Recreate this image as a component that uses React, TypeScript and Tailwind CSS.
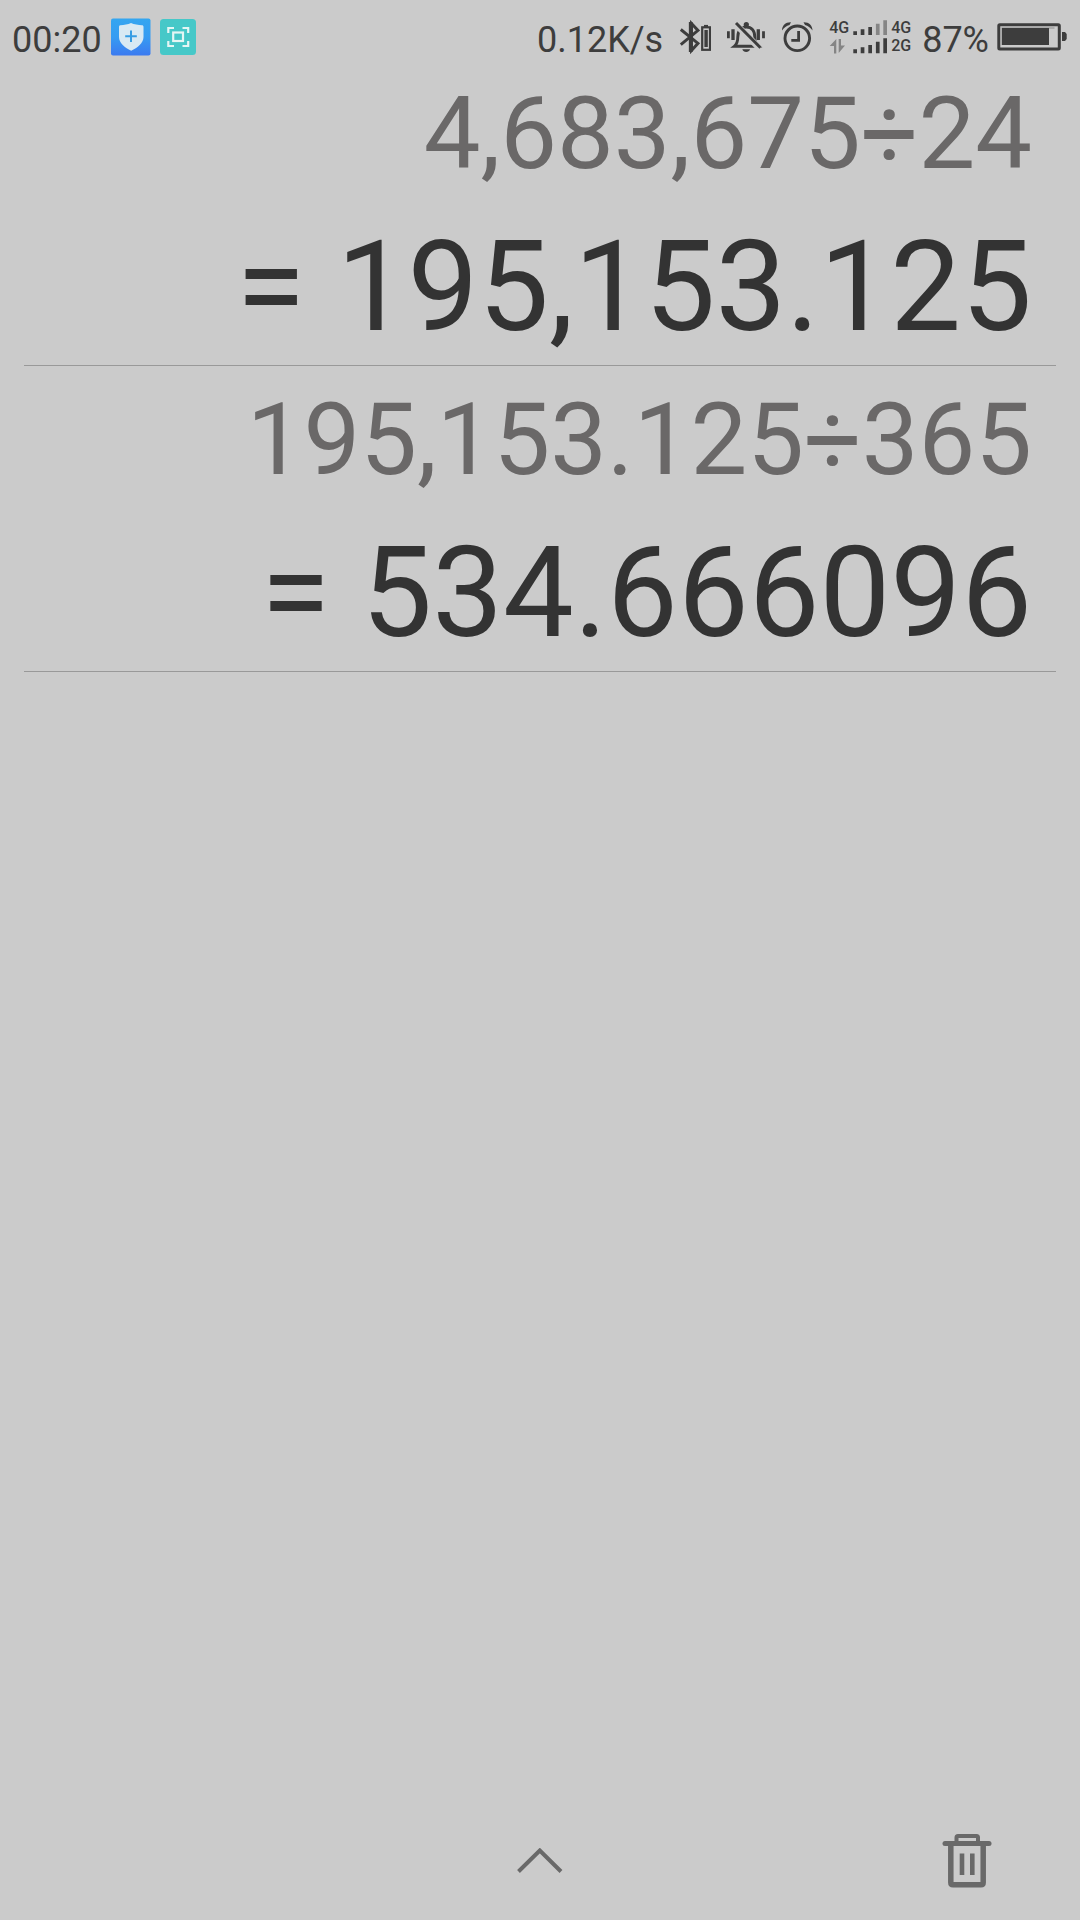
type Entry = { expression: string; result: string };

const history: Entry[] = [
  { expression: '4,683,675÷24', result: '195,153.125' },
  { expression: '195,153.125÷365', result: '534.666096' },
];

function ShieldAppIcon() {
  return (
    <svg width="40" height="38" viewBox="0 0 40 38" aria-hidden="true">
      <defs>
        <linearGradient id="shieldBg" x1="0" y1="0" x2="0" y2="1">
          <stop offset="0" stopColor="#34a6f0" />
          <stop offset="0.5" stopColor="#369cf2" />
          <stop offset="1" stopColor="#3c7af0" />
        </linearGradient>
      </defs>
      <rect y="0.5" width="39.5" height="37" rx="2" fill="url(#shieldBg)" />
      <path d="M20 5c3 1.400 7.500 2 11 2.200.9 0 1.500.6 1.500 1.500V19c0 6-6 11-12.300 13.700C14 30 8 25 8 19V8.700c0-.9.6-1.500 1.500-1.500C13 7 17 6.400 20 5z" fill="#d8e9f3" />
      <path d="M20 12.500v11.500M14.200 18.300h11.600" stroke="#369de4" strokeWidth="2" />
    </svg>
  );
}

function ScanAppIcon() {
  return (
    <svg width="36" height="36" viewBox="0 0 36 36" aria-hidden="true">
      <rect width="36" height="36" rx="3.500" fill="#46c8c8" />
      <g fill="none" stroke="#e4f6f4" strokeWidth="2.200">
        <path d="M8.300 14V9H14M22.500 9h5.700v5M28.200 22v5h-5.700M14 27H8.300v-5" />
        <rect x="13.200" y="13.500" width="9.800" height="8.500" />
      </g>
    </svg>
  );
}

function BluetoothIcon() {
  return (
    <svg width="32" height="34" viewBox="0 0 32 34" fill="none" stroke="#3d3d3d" aria-label="Bluetooth" role="img">
      <path d="M1.800 9.500 19 23.300l-6.500 7.200V3.500L19 10.400 1.800 24.700" strokeWidth="2.900" />
      <path d="M11.700 2v30" strokeWidth="3.700" />
      <rect x="23.200" y="7.300" width="7.800" height="22.500" strokeWidth="2.200" />
      <path d="M25 5.900h4" strokeWidth="2" />
      <path d="M27.100 10v17" strokeWidth="3.400" />
    </svg>
  );
}

function MutedBellIcon() {
  return (
    <svg width="38" height="34" viewBox="0 0 38 34" fill="none" aria-label="Vibrate" role="img">
      <path d="M1.400 11.300v7M36.500 11.300v7" stroke="#3d3d3d" strokeWidth="2.800" />
      <path d="M6 9.300V20M31.300 9.300V20" stroke="#3d3d3d" strokeWidth="3.300" />
      <circle cx="19.300" cy="4.500" r="2.600" fill="#3d3d3d" />
      <path d="M7.300 26.300c3-2.400 3.500-4.500 3.500-9.300 0-6.500 3.500-10 8.500-10s8.500 3.500 8.500 10c0 4.800.5 6.900 3.500 9.300z" stroke="#3d3d3d" strokeWidth="2.900" />
      <path d="M15.300 29.200h7.800c-.7 1.800-2 2.800-3.900 2.800s-3.200-1-3.900-2.800z" fill="#3d3d3d" />
      <path d="M8 3.500 33 28.800" stroke="#cbcbcb" strokeWidth="6.500" />
      <path d="M9 3 33.500 27.800" stroke="#3d3d3d" strokeWidth="3" />
    </svg>
  );
}

function AlarmIcon() {
  return (
    <svg width="32" height="34" viewBox="0 0 32 34" fill="none" stroke="#3d3d3d" aria-label="Alarm" role="img">
      <circle cx="16.300" cy="18.300" r="12.300" strokeWidth="2.900" />
      <path d="M17.600 11v9.300h-7.300" strokeWidth="2.800" />
      <path d="M1 10.500C1 5.500 4.500 2 10 2.200L8.500 4.900C5.500 5.600 3.200 7.500 1 10.500zM31.500 10.500c0-5-3.500-8.500-9-8.300L24 4.900c3 .7 5.300 2.600 7.500 5.600z" fill="#3d3d3d" stroke="none" />
    </svg>
  );
}

function DataArrows() {
  return (
    <svg width="20" height="18" viewBox="0 0 20 18" fill="#858585" aria-hidden="true">
      <path d="M7.300 2v14.500H5V9H.7zM9.700 2H12v6.500h4L9.700 16z" />
    </svg>
  );
}

function SignalBars() {
  return (
    <svg width="34" height="36" viewBox="0 0 34 36" fill="#3d3d3d" aria-label="Signal strength" role="img">
      <path d="M.3 12.300h3.700V16H.3zM7.700 10.300h3.700V16H7.700zM15.300 8H19v8h-3.700z" />
      <path d="M22.900 4.700h3.700V16h-3.700zM30.300 1.300H34V16h-3.700z" fill="#858585" />
      <path d="M.3 30.300h3.700v4H.3zM7.700 28.300h3.700v6H7.700zM15.300 26H19v8.300h-3.700zM22.900 22.700h3.700v11.600h-3.700zM30.300 19.300H34v15h-3.700z" />
    </svg>
  );
}

function BatteryIcon() {
  return (
    <svg width="70" height="28" viewBox="0 0 70 28" aria-hidden="true">
      <rect x="1.800" y="1.700" width="60.500" height="24.300" rx="1" fill="none" stroke="#3d3d3d" strokeWidth="3" />
      <path d="M4.500 4.500h53v1H5.200V22H4.500z" fill="#8b8b8b" />
      <rect x="5" y="5" width="47" height="17" fill="#3d3d3d" />
      <path d="M65 9h3l1.700 2v5L68 18h-3z" fill="#3d3d3d" />
    </svg>
  );
}

function StatusBar() {
  return (
    <header className="flex h-[60px] items-center justify-between pt-3.5 pr-[13px] pl-3 text-4xl leading-9 text-[#3d3d3d]">
      <div className="flex items-center gap-[9px]">
        <time className="pt-1.5">00:20</time>
        <ShieldAppIcon />
        <ScanAppIcon />
      </div>
      <div className="flex items-center gap-4">
        <span className="pt-1.5">0.12K/s</span>
        <BluetoothIcon />
        <MutedBellIcon />
        <AlarmIcon />
        <div className="flex items-center gap-[11px]">
          <div className="flex items-center gap-1 text-base leading-[18px] font-medium">
            <div className="flex flex-col">
              <span>4G</span>
              <DataArrows />
            </div>
            <SignalBars />
            <div className="flex flex-col">
              <span>4G</span>
              <span>2G</span>
            </div>
          </div>
          <div className="flex items-center gap-2">
            <span className="pt-1.5">87%</span>
            <BatteryIcon />
          </div>
        </div>
      </div>
    </header>
  );
}

function HistoryItem({ expression, result }: Entry) {
  return (
    <li className="border-b border-[#999999] px-6 pt-3.5 pb-1 text-right">
      <p className="text-[101px] leading-[119px] text-[#6a6868]">{expression}</p>
      <p className="mt-5 text-[126px] leading-[148px] text-[#333333]">= {result}</p>
    </li>
  );
}

export default function App() {
  return (
    <div className="flex min-h-screen flex-col bg-[#cbcbcb] font-['Roboto',sans-serif]">
      <StatusBar />

      <main className="flex-1 px-6">
        <ol>
          {history.map((h) => (
            <HistoryItem key={h.expression} {...h} />
          ))}
        </ol>
      </main>

      <footer className="grid h-[120px] grid-cols-3 items-center px-16 pt-0.5 text-[#696969]">
        <button type="button" aria-label="Show keypad" className="col-start-2 justify-self-center p-6">
          <svg width="46" height="26" viewBox="0 0 46 26" fill="none" stroke="currentColor" strokeWidth="4">
            <path d="M1.500 23.500 22.800 2.500 44 23.500" />
          </svg>
        </button>
        <button type="button" aria-label="Clear history" className="justify-self-end p-6">
          <svg width="50" height="54" viewBox="0 0 50 54" fill="none" stroke="currentColor">
            <path d="M14.500 8V3.500Q14.500 2 16 2H34.500Q36 2 36 3.500V8" strokeWidth="4" />
            <path d="M3 9.500H47" strokeWidth="5" strokeLinecap="round" />
            <path d="M8.800 10V48.500Q8.800 50.800 11 50.800H39Q41.200 50.800 41.200 48.500V10" strokeWidth="5.500" />
            <path d="M20 19.500V41M30.300 19.500V41" strokeWidth="4.600" />
          </svg>
        </button>
      </footer>
    </div>
  );
}
